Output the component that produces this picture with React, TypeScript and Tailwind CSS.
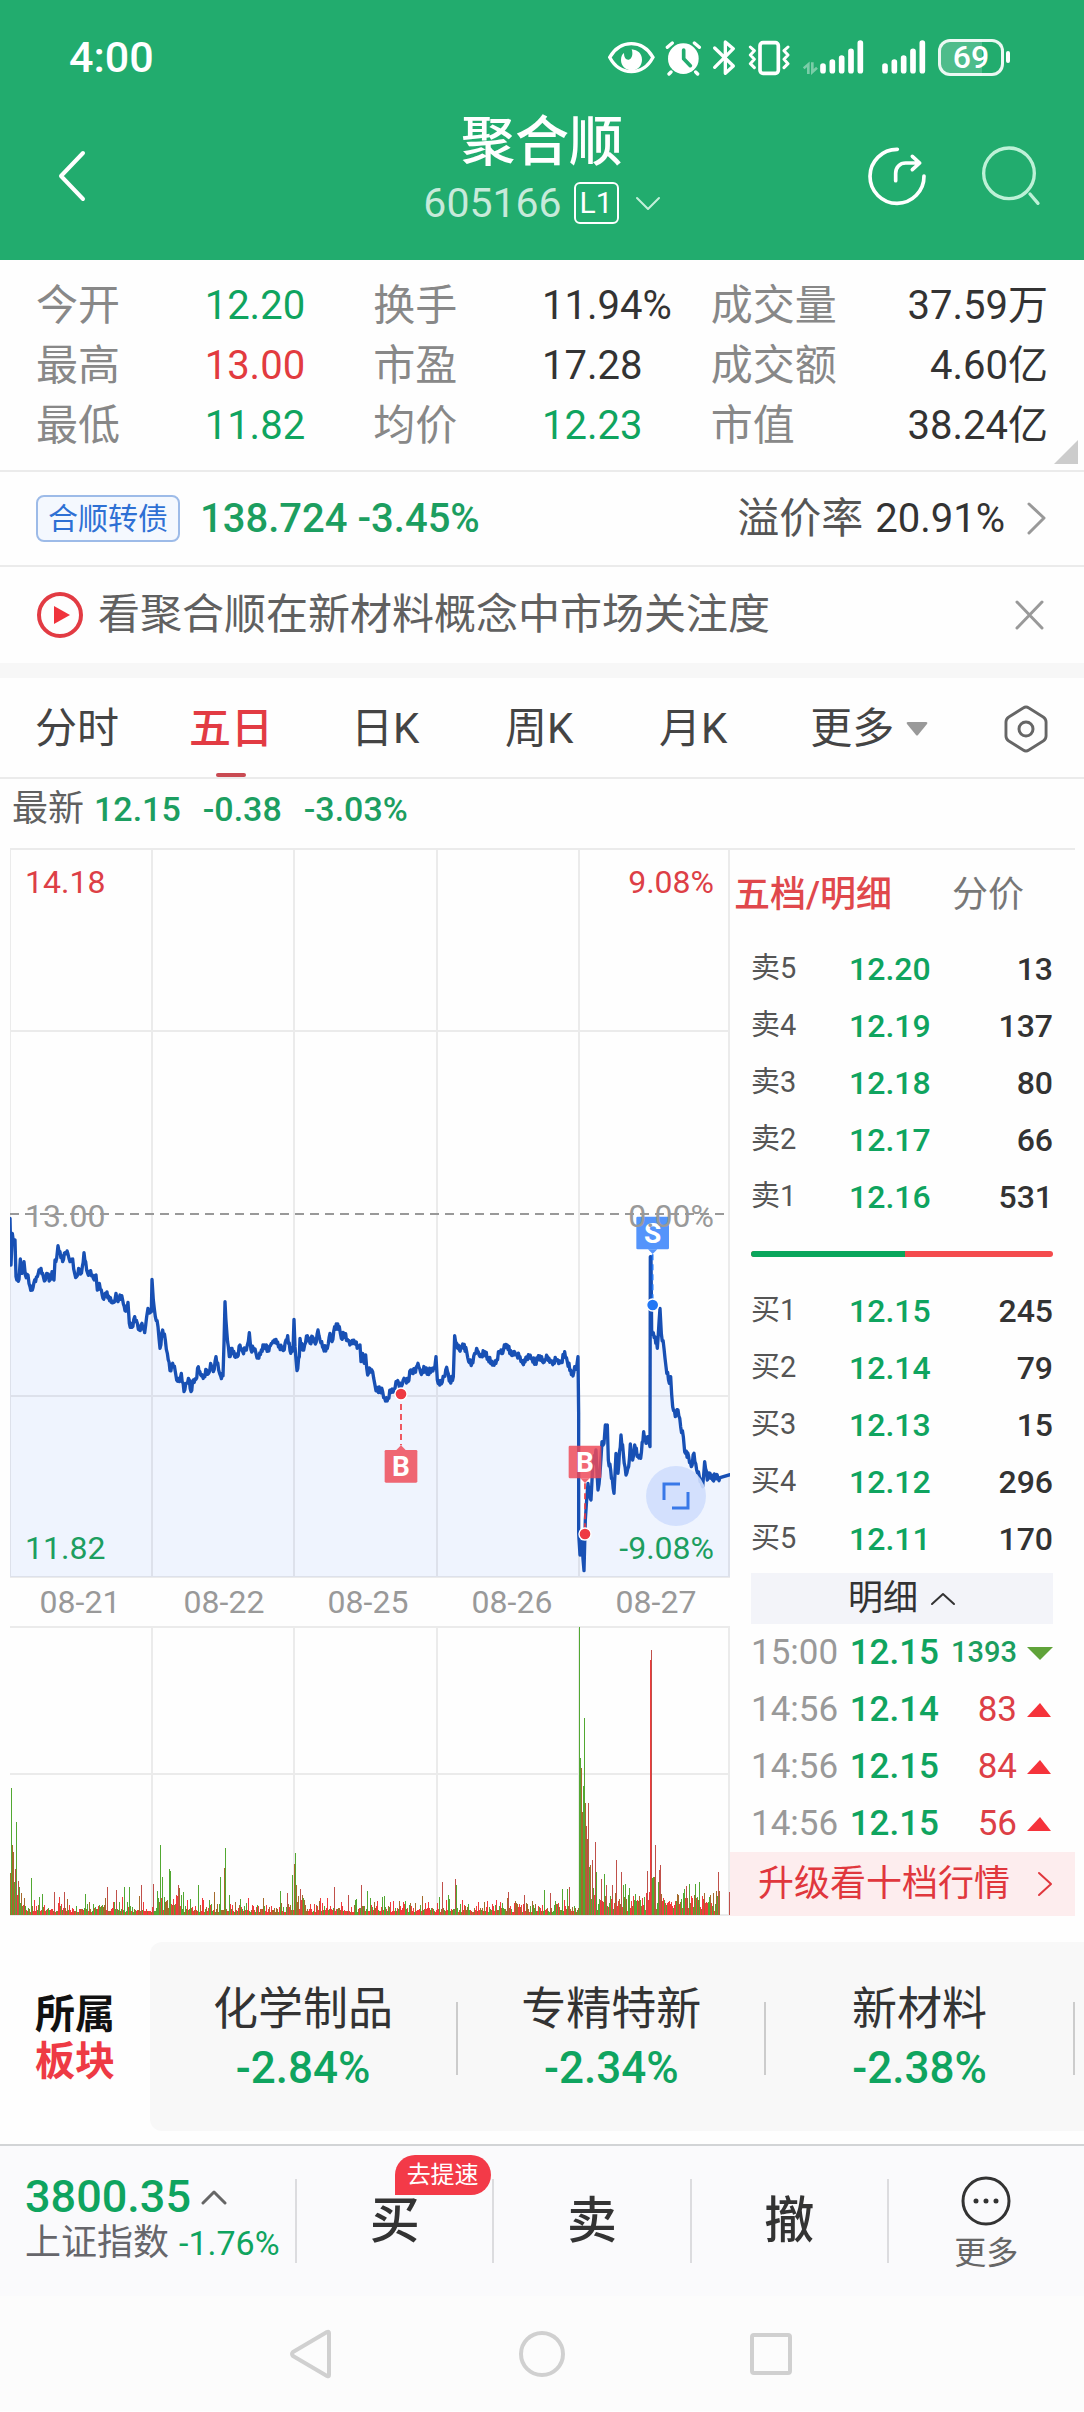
import type { ReactNode } from "react";

type Tone = "up" | "down" | "plain";
const toneClass: Record<Tone, string> = {
  up: "text-[#e23b3f]",
  down: "text-[#0fa45f]",
  plain: "text-[#333]",
};

const stats: { label: string; value: string; tone: Tone }[][] = [
  [
    { label: "今开", value: "12.20", tone: "down" },
    { label: "最高", value: "13.00", tone: "up" },
    { label: "最低", value: "11.82", tone: "down" },
  ],
  [
    { label: "换手", value: "11.94%", tone: "plain" },
    { label: "市盈", value: "17.28", tone: "plain" },
    { label: "均价", value: "12.23", tone: "down" },
  ],
  [
    { label: "成交量", value: "37.59万", tone: "plain" },
    { label: "成交额", value: "4.60亿", tone: "plain" },
    { label: "市值", value: "38.24亿", tone: "plain" },
  ],
];

const asks = [
  ["卖5", "12.20", "13"],
  ["卖4", "12.19", "137"],
  ["卖3", "12.18", "80"],
  ["卖2", "12.17", "66"],
  ["卖1", "12.16", "531"],
];
const bids = [
  ["买1", "12.15", "245"],
  ["买2", "12.14", "79"],
  ["买3", "12.13", "15"],
  ["买4", "12.12", "296"],
  ["买5", "12.11", "170"],
];
const ticks = [
  { time: "15:00", price: "12.15", lots: "1393", buy: false },
  { time: "14:56", price: "12.14", lots: "83", buy: true },
  { time: "14:56", price: "12.15", lots: "84", buy: true },
  { time: "14:56", price: "12.15", lots: "56", buy: true },
];
const sectors = [
  ["化学制品", "-2.84%"],
  ["专精特新", "-2.34%"],
  ["新材料", "-2.38%"],
];
const days = ["08-21", "08-22", "08-25", "08-26", "08-27"];

/* Turning points of the five-day price curve, in thirds of a pixel. */
const curve =
  "30,115 33,255 37,160 42,185 45,180 48,290 57,298 61,237 66,280 72,245 76,285 84,285 90,320 97,330 104,300 112,290 117,270 123,265 130,290 136,300 140,280 150,300 156,275 162,300 165,240 170,235 174,197 180,215 188,245 196,218 204,222 210,245 218,237 224,280 230,290 236,265 242,282 247,260 252,218 257,245 263,280 272,272 280,295 288,285 292,330 298,310 304,330 309,355 316,340 326,348 334,367 344,365 348,340 354,365 360,345 368,360 375,392 384,367 388,430 396,442 404,410 412,430 418,450 426,430 434,458 440,410 444,385 450,398 454,395 456,298 460,360 466,410 474,440 480,505 488,450 496,480 502,520 510,572 518,550 526,575 530,600 538,605 544,580 552,635 560,610 568,600 573,635 580,600 588,598 595,560 602,585 612,588 620,570 626,580 632,550 640,575 648,530 656,570 662,588 669,588 672,490 675,365 680,450 688,530 696,505 704,530 712,530 720,495 728,515 736,510 742,495 748,458 753,510 760,505 768,520 774,532 784,510 794,495 804,510 814,490 828,478 838,498 850,512 858,480 863,467 870,512 879,512 882,418 885,500 891,572 898,530 900,475 908,510 914,495 922,467 930,490 938,470 946,492 954,450 960,480 970,505 982,505 990,460 996,485 1004,440 1018,440 1024,475 1032,460 1042,478 1052,490 1064,488 1074,500 1080,495 1083,545 1088,520 1093,550 1097,525 1103,585 1110,565 1118,575 1124,610 1128,632 1140,628 1148,635 1154,655 1164,655 1172,630 1182,628 1188,605 1196,612 1204,620 1212,595 1224,605 1232,570 1244,575 1254,550 1262,578 1274,565 1284,578 1296,565 1304,565 1308,530 1312,600 1324,612 1332,590 1340,562 1350,605 1360,590 1364,467 1370,490 1378,510 1388,492 1400,515 1406,545 1416,550 1424,520 1430,505 1440,530 1454,515 1464,535 1480,550 1490,540 1498,515 1508,520 1513,495 1522,495 1534,525 1546,522 1560,530 1568,550 1580,530 1596,535 1606,548 1620,528 1630,548 1642,530 1656,548 1668,538 1684,548 1694,515 1702,545 1712,570 1719,588 1724,560 1730,560 1734,530 1736,700 1736,1060 1740,1125 1746,1085 1752,1172 1756,1020 1760,960 1764,910 1773,960 1778,860 1788,810 1794,930 1800,880 1806,785 1812,790 1816,735 1822,735 1825,840 1832,870 1842,940 1848,820 1854,880 1863,765 1870,820 1878,885 1886,860 1891,792 1898,840 1904,795 1914,830 1922,835 1931,755 1938,790 1944,770 1950,800 1951,230 1953,230 1955,450 1965,470 1972,505 1980,385 1984,460 1992,505 1998,560 2008,610 2012,590 2018,680 2026,710 2034,690 2042,740 2050,770 2054,815 2066,830 2074,860 2082,820 2090,870 2098,890 2108,920 2114,845 2122,900 2130,880 2138,900 2146,885 2154,895 2160,893 2190,884";

function noise(n: number) {
  const v = Math.sin(n * 127.1 + 11.7) * 43758.5453;
  return v - Math.floor(v);
}

/* Adds one-tick wobble between the turning points. */
function priceLine() {
  const pts = curve.split(" ").map((p) => p.split(",").map(Number));
  const out: string[] = [];
  pts.forEach(([x, y], i) => {
    out.push(`${x},${y}`);
    const next = pts[i + 1];
    if (!next || i > pts.length - 3) return;
    const gap = next[0] - x;
    if (gap < 5) return;
    const steps = Math.round(gap / 2.5);
    for (let s = 1; s < steps; s++) {
      const t = s / steps;
      const wob = (s % 2 ? 1 : -1) * (noise(x + s) > 0.35 ? 8 : 2);
      out.push(`${(x + gap * t).toFixed(1)},${(y + (next[1] - y) * t + wob).toFixed(1)}`);
    }
  });
  return out.join(" ");
}
const line = priceLine();

const R = "#f03a3c";
const G = "#52a832";
const M = "#a46a2c";
const D = "#c0504a";
/* Tall volume bars: x, height, colour. */
const spikes: [number, number, string][] = [
  [0, 42, M], [1, 127, G], [2, 70, M], [3, 63, M], [4, 33, G], [5, 46, D], [6, 93, G], [8, 34, D], [9, 28, G], [11, 22, M],
  [21, 37, G], [32, 21, G], [44, 23, D], [54, 23, D], [75, 21, G], [97, 28, D], [106, 25, D], [114, 28, G], [119, 28, G],
  [131, 30, D], [143, 31, D], [150, 70, G], [152, 38, G], [159, 46, G], [160, 44, G], [168, 30, D], [169, 27, M], [188, 30, G],
  [204, 23, M], [210, 38, G], [214, 47, M], [215, 67, G], [219, 20, G], [270, 24, G], [277, 22, D], [282, 40, G], [284, 51, M],
  [285, 62, G], [286, 30, M], [290, 26, D], [324, 28, D], [338, 20, D], [351, 30, D], [357, 24, G], [374, 19, G], [432, 33, D],
  [438, 20, G], [445, 36, D], [446, 30, G], [498, 23, D], [514, 20, D], [534, 25, G], [540, 22, D], [552, 26, G], [557, 26, G], [559, 28, D],
  [569, 288, G], [570, 157, G], [571, 147, M], [572, 103, M], [573, 129, G], [574, 197, G], [575, 112, M], [576, 89, D], [577, 76, M], [578, 112, D],
  [579, 48, G], [580, 50, M], [582, 55, D], [583, 27, G], [585, 73, D], [586, 43, G], [591, 36, D], [594, 41, G], [596, 30, D],
  [602, 30, D], [606, 55, D], [611, 43, D], [613, 30, G], [615, 31, G], [619, 27, G], [637, 44, D], [640, 255, R], [641, 265, D],
  [642, 37, G], [643, 38, G], [644, 38, M], [645, 70, D], [648, 33, G], [649, 45, D], [650, 50, D], [651, 21, M],
  [674, 26, G], [676, 29, D], [679, 31, G], [685, 31, G], [689, 33, G], [694, 22, M], [700, 20, M], [706, 24, M], [708, 43, D], [709, 24, M], [719, 23, D],
];
const minuteBars = Array.from({ length: 710 }, (_, x) => {
  const a = noise(x);
  const late = x > 568 ? 7 : x < 10 || Math.abs(x - 160) < 14 || (x > 284 && x < 296) ? 6 : 0;
  const h = 3 + -Math.log(1 - a * 0.96) * 5 + late * noise(x + 900) * 2;
  const c = noise(x + 400);
  return { x, h: Math.round(h), c: c < 0.48 ? R : c < 0.74 ? M : G };
});

function Chevron({ d, w, h, color, stroke = 3 }: { d: string; w: number; h: number; color: string; stroke?: number }) {
  return (
    <svg width={w} height={h} viewBox={`0 0 ${w} ${h}`} fill="none" stroke={color} strokeWidth={stroke} strokeLinecap="round" strokeLinejoin="round" aria-hidden="true">
      <path d={d} />
    </svg>
  );
}

function Signal() {
  return (
    <svg width="44" height="38" viewBox="0 0 132 114" stroke="#fff" strokeWidth="17" strokeLinecap="round" aria-hidden="true">
      <path d="M9 84v14M37 72v26M65 60v38M93 40v58M121 15v83" />
    </svg>
  );
}

function StatusBar() {
  return (
    <div className="flex h-[112px] items-center justify-between pt-0.5 pr-[74px] pl-[69px]">
      <time className="text-[43px] leading-none font-medium">4:00</time>
      <div className="flex items-center">
        <svg width="47" height="38" viewBox="50 50 141 114" fill="none" aria-hidden="true">
          <path d="M55 108C70 82 94 67 120 67s50 15 65 41c-15 28-39 43-65 43s-50-15-65-43Z" stroke="#fff" strokeWidth="10" />
          <path d="M121 84c18 2 31 12 31 31s-14 32-31 32-32-12-32-31c0-11 4-18 9-21 0 14 6 21 14 20 10-2 14-16 9-31Z" fill="#fff" />
        </svg>
        <svg className="ml-2.5" width="37" height="38" viewBox="224 50 111 114" aria-hidden="true">
          <circle cx="279" cy="112" r="46" fill="#fff" />
          <path d="M231 78l15-13M327 78l-15-13M242 152l-6 6M316 152l6 6" stroke="#fff" strokeWidth="10" strokeLinecap="round" />
          <path d="M280 86v26l20 21" fill="none" stroke="#22ac6e" strokeWidth="11" strokeLinecap="round" strokeLinejoin="round" />
        </svg>
        <svg className="ml-2.5" width="24" height="38" viewBox="365 50 72 114" fill="none" stroke="#fff" strokeWidth="10" strokeLinejoin="round" strokeLinecap="round" aria-hidden="true">
          <path d="M373 80l56 54-24 22V62l24 20-56 56" />
        </svg>
        <svg className="ml-3" width="43" height="38" viewBox="470 50 129 114" fill="none" stroke="#fff" aria-hidden="true">
          <rect x="506" y="64" width="55" height="92" rx="9" strokeWidth="11" />
          <path d="M477 77l12 11-12 13 12 13-12 13 12 12M590 77l-12 11 12 13-12 13 12 13-12 12" strokeWidth="9" strokeLinejoin="round" strokeLinecap="round" />
        </svg>
        <svg className="ml-3" width="15" height="38" viewBox="634 50 45 114" fill="none" stroke="#fff" strokeOpacity=".4" strokeWidth="8" aria-hidden="true">
          <path d="M636 141l14-12v29M662 123v29l14-13" />
        </svg>
        <div className="ml-0.5"><Signal /></div>
        <div className="ml-[18px]"><Signal /></div>
        <div className="ml-3 flex h-[37px] w-[66px] items-center justify-center rounded-[12px] border-3 border-white/90 bg-[linear-gradient(90deg,rgba(255,255,255,.2)_68%,transparent_68%)] text-[32px] leading-none font-medium">69</div>
        <div className="ml-0.5 h-3 w-1 rounded-full bg-white" />
      </div>
    </div>
  );
}

function Header() {
  return (
    <header className="bg-[#22ac6e] pb-6 text-white">
      <StatusBar />
      <div className="grid grid-cols-[1fr_auto_1fr]">
        <div className="flex items-center pt-1 pl-14">
          <button aria-label="返回"><Chevron d="M27 4L5 27l22 23" w={32} h={54} color="#fff" stroke={4} /></button>
        </div>
        <div className="flex flex-col items-center">
          <h1 className="text-[54px] leading-[62px] font-medium">聚合顺</h1>
          <button className="flex h-[62px] items-center pb-1 text-[41px] leading-none text-white/75">
            605166
            <span className="mr-4 ml-3 flex h-[42px] w-[45px] items-center justify-center rounded-md border-2 border-white text-[30px] leading-none text-white">L1</span>
            <Chevron d="M2 3l11 11L24 3" w={26} h={17} color="#c4f0da" stroke={2} />
          </button>
        </div>
        <div className="flex items-center justify-end gap-[54px] pt-1 pr-[43px]">
          <button aria-label="分享">
            <svg width="60" height="60" viewBox="84 107 180 180" fill="none" stroke="#fff" strokeWidth="11" strokeLinecap="round" strokeLinejoin="round">
              <path d="M175 117A81 81 0 1 0 255 197" />
              <path d="M170 211v-22c0-18 12-31 30-31h42M220 138l22 20-22 20" />
            </svg>
          </button>
          <button aria-label="搜索">
            <svg width="60" height="60" viewBox="423 107 180 180" fill="none" stroke="#bdf1d7" strokeWidth="10" strokeLinecap="round">
              <circle cx="507" cy="189" r="76" />
              <path d="M570 251l24 28" />
            </svg>
          </button>
        </div>
      </div>
    </header>
  );
}

function Marker({ x, y, dotY, up, letter, fill, dot }: { x: number; y: number; dotY: number; up: boolean; letter: string; fill: string; dot: string }) {
  const tip = up ? `M${x - 14} ${y}l14-14 14 14Z` : `M${x - 14} ${y + 98}l14 14 14-14Z`;
  return (
    <g>
      <path d={up ? `M${x} ${dotY}V${y - 14}` : `M${x} ${y + 113}V${dotY}`} stroke={dot} strokeWidth="5" strokeDasharray="18 12" />
      <rect x={x - 49} y={y} width="98" height="98" rx="4" fill={fill} fillOpacity=".84" />
      <path d={tip} fill={fill} fillOpacity=".84" />
      <text x={x} y={y + 78} textAnchor="middle" fontSize="84" fontWeight="700" fill="#fff">{letter}</text>
      <circle cx={x} cy={dotY} r="18" fill={dot} stroke="#fff" strokeWidth="4" />
    </g>
  );
}

function PriceChart() {
  return (
    <div className="relative text-[32px] leading-none">
      <svg className="block h-auto w-full" viewBox="0 0 720 728" aria-label="五日走势">
        <g transform="translate(-10 330) scale(.33333)">
          <polygon points={`${line} 2190,1191 30,1191`} fill="#eff4fe" />
        </g>
        <g stroke="#000" strokeOpacity=".075" strokeWidth="2" fill="none">
          <path d="M0 0v727M142 0v727M284 0v727M427 0v727M569 0v727M719 0v727M0 181h720M0 546h720M0 727h720" />
        </g>
        <path d="M0 364h720" stroke="#999" strokeWidth="2" strokeDasharray="9 6" />
        <g transform="translate(-10 330) scale(.33333)">
          <polyline points={line} fill="none" stroke="#1850b4" strokeWidth="10" strokeLinejoin="round" strokeLinecap="round" />
          <Marker x={1203} y={810} dotY={642} up letter="B" fill="#ee4a58" dot="#ee3a42" />
          <Marker x={1755} y={797} dotY={1062} up={false} letter="B" fill="#ee4a58" dot="#ee3a42" />
          <Marker x={1958} y={110} dotY={375} up={false} letter="S" fill="#3380fa" dot="#2277f5" />
        </g>
      </svg>
      <span className="absolute top-4 left-[15px] text-[#dd3f46]">14.18</span>
      <span className="absolute top-4 right-4 text-[#dd3f46]">9.08%</span>
      <span className="absolute top-[350px] left-[15px] text-[#999]">13.00</span>
      <span className="absolute top-[350px] right-4 text-[#999]">0.00%</span>
      <span className="absolute bottom-3.5 left-[15px] text-[#1c9e60]">11.82</span>
      <span className="absolute right-4 bottom-3.5 text-[#1c9e60]">-9.08%</span>
      <button aria-label="全屏" className="absolute right-6 bottom-[52px] flex h-[60px] w-[60px] items-center justify-center rounded-full bg-[#cfdefd]/90">
        <svg width="28" height="28" viewBox="0 0 28 28" fill="none" stroke="#3878e8" strokeWidth="3">
          <path d="M2 18V2h16M26 10v16H10" />
        </svg>
      </button>
    </div>
  );
}

function VolumeChart() {
  return (
    <svg className="block h-auto w-full" viewBox="0 0 720 290" aria-label="成交量" shapeRendering="crispEdges">
      <path d="M0 1h720M0 148h720M0 289h720M142 0v290M284 0v290M427 0v290M569 0v290M719 0v290" stroke="#ebebeb" strokeWidth="2" />
      {minuteBars.map((b) => (
        <rect key={b.x} x={b.x} y={289 - b.h} width="1" height={b.h} fill={b.c} />
      ))}
      {spikes.map(([x, h, c]) => (
        <rect key={x} x={x} y={289 - h} width="1" height={h} fill={c} />
      ))}
    </svg>
  );
}

function Book({ rows, label }: { rows: string[][]; label: string }) {
  return (
    <table aria-label={label} className="w-full table-fixed leading-none">
      <tbody>
        {rows.map(([name, price, lots]) => (
          <tr key={name} className="h-[57px]">
            <th scope="row" className="w-[98px] text-left text-[29px] font-normal text-[#555]">{name}</th>
            <td className="text-[32px] font-medium text-[#0fa45f]">{price}</td>
            <td className="w-[90px] text-right text-[32px] font-medium text-[#333]">{lots}</td>
          </tr>
        ))}
      </tbody>
    </table>
  );
}

function SidePanel() {
  return (
    <aside className="flex w-[345px] shrink-0 flex-col">
      <div className="flex h-[90px] items-center pl-1 text-[36px] leading-none">
        <button className="font-medium text-[#e0484c]">五档/明细</button>
        <button className="ml-[60px] text-[#777]">分价</button>
      </div>
      <div className="pr-[22px] pl-[21px]">
        <Book rows={asks} label="卖盘" />
        <div className="flex h-[57px] items-center">
          <div className="flex h-1.5 w-full overflow-hidden rounded-full bg-[#f44b4d]">
            <div className="w-[51%] bg-[#0aa65c]" />
          </div>
        </div>
        <Book rows={bids} label="买盘" />
        <button className="mt-1.5 flex h-[51px] w-full items-center justify-center gap-3 bg-[#f3f4f9] text-[35px] leading-none text-[#333]">
          明细
          <Chevron d="M2 13L13 3l11 10" w={26} h={16} color="#333" stroke={2} />
        </button>
        <table aria-label="成交明细" className="w-full leading-none">
          <tbody>
            {ticks.map((t, i) => (
              <tr key={i} className="h-[57px]">
                <td className="text-[35px] text-[#999]">{t.time}</td>
                <td className="text-right text-[35px] font-medium text-[#0fa45f]">{t.price}</td>
                <td className={t.buy ? "w-[78px] text-right text-[35px] text-[#dd3f46]" : "w-[78px] text-right text-[29px] font-medium text-[#1c9e60]"}>{t.lots}</td>
                <td className="w-[36px]">
                  <svg className="ml-auto" width="26" height="14" viewBox="0 0 26 14" aria-label={t.buy ? "买入" : "卖出"}>
                    <path d={t.buy ? "M0 14L13 0l11 14Z" : "M0 1h26L13 14Z"} fill={t.buy ? "#f5333b" : "#60a33a"} />
                  </svg>
                </td>
              </tr>
            ))}
          </tbody>
        </table>
      </div>
      <button className="flex flex-1 items-center justify-between bg-[#fdedee] pr-[22px] pl-7 text-[36px] leading-none text-[#e0373d]">
        升级看十档行情
        <Chevron d="M2 2l12 11L2 24" w={16} h={26} color="#e0373d" stroke={2} />
      </button>
    </aside>
  );
}

function Divider({ children }: { children?: ReactNode }) {
  return <div className="flex-1 border-l-2 border-[#dcdcdf]">{children}</div>;
}

export default function App() {
  return (
    <div className="min-h-screen bg-[#fefefe] font-['Roboto','Noto_Sans_CJK_SC',sans-serif] text-[#333]">
      <Header />

      <section className="relative grid h-[212px] grid-cols-3 border-b-2 border-[#ebebeb] px-9 pt-4 leading-[60px]">
        {stats.map((col, i) => (
          <dl key={i}>
            {col.map((s) => (
              <div key={s.label} className={i === 2 ? "flex justify-between" : "flex"}>
                <dt className={i === 2 ? "text-[42px] text-[#888]" : "w-1/2 text-[42px] text-[#888]"}>{s.label}</dt>
                <dd className={`text-[40px] whitespace-nowrap ${toneClass[s.tone]}`}>{s.value}</dd>
              </div>
            ))}
          </dl>
        ))}
        <svg className="absolute right-1.5 bottom-1.5" width="24" height="24" viewBox="0 0 24 24" aria-hidden="true">
          <path d="M24 0v24H0Z" fill="#ccc" />
        </svg>
      </section>

      <a href="#bond" className="flex h-[95px] items-center border-b-2 border-[#ebebeb] pr-[38px] pl-9 text-[40px] leading-none">
        <span className="flex h-[47px] items-center rounded-lg border-2 border-[#9dbbe8] bg-[#f4f8fe] px-[10px] text-[30px] text-[#2e70d4]">合顺转债</span>
        <span className="ml-5 font-medium text-[#1c9e60]">138.724 -3.45%</span>
        <span className="mr-3 ml-auto text-[42px] text-[#555]">溢价率</span>
        <span>20.91%</span>
        <span className="ml-[22px]"><Chevron d="M2 2l15 14L2 31" w={19} h={33} color="#999" /></span>
      </a>

      <div className="flex h-24 items-center pr-10 pl-9">
        <svg width="48" height="48" viewBox="0 0 48 48" aria-hidden="true">
          <circle cx="24" cy="24" r="21" fill="none" stroke="#e23b43" strokeWidth="4" />
          <path d="M18 15l16 9-16 9Z" fill="#f0333c" />
        </svg>
        <a href="#topic" className="ml-3.5 text-[42px] leading-none text-[#606060]">看聚合顺在新材料概念中市场关注度</a>
        <button aria-label="关闭" className="ml-auto"><Chevron d="M2 2l25 26M27 2L2 28" w={29} h={30} color="#999" /></button>
      </div>
      <div className="h-[15px] bg-[#f7f7f7]" />

      <nav className="flex h-[101px] items-center border-b-2 border-[#ebebeb] pt-0.5 pr-9 text-[42px] leading-none text-[#444]">
        <button className="w-[14.7%]">分时</button>
        <button className="relative flex h-full w-[14.7%] items-center justify-center font-medium text-[#e23b43]">
          五日
          <span className="absolute bottom-0 left-1/2 h-1 w-[30px] -translate-x-1/2 rounded-sm bg-[#c94a52]" />
        </button>
        <button className="w-[14.7%]">日K</button>
        <button className="w-[14.7%]">周K</button>
        <button className="w-[14.7%]">月K</button>
        <button className="ml-10 flex items-center gap-3">
          更多
          <svg width="22" height="14" viewBox="0 0 22 14" aria-hidden="true"><path d="M2 0h18q2 0 1 2L12 13q-1 1-2 0L1 2Q0 0 2 0Z" fill="#999" /></svg>
        </button>
        <button aria-label="设置" className="ml-auto">
          <svg width="44" height="48" viewBox="0 0 44 48" fill="none" stroke="#666" strokeWidth="3" strokeLinejoin="round">
            <path d="M19 3q3-2 6 0l15 9q3 2 3 5v14q0 3-3 5l-15 9q-3 2-6 0L4 36q-3-2-3-5V17q0-3 3-5Z" transform="translate(1 0) scale(.955 1)" />
            <circle cx="22" cy="24" r="7" />
          </svg>
        </button>
      </nav>

      <div className="flex h-[69px] items-center gap-[22px] pb-2.5 pl-3 text-[34px] leading-none font-medium text-[#1c9e60]">
        <span><span className="mr-2.5 text-[36px] font-normal text-[#606060]">最新</span>12.15</span>
        <span>-0.38</span>
        <span>-3.03%</span>
      </div>

      <main className="mr-[9px] ml-2.5 flex border-t-2 border-[#ebebeb]">
        <div className="min-w-0 flex-1">
          <PriceChart />
          <div className="grid h-12 grid-cols-5 items-center text-center text-[32px] leading-none text-[#999]">
            {days.map((d) => <span key={d} className="pr-1">{d}</span>)}
          </div>
          <VolumeChart />
        </div>
        <SidePanel />
      </main>

      <section className="mt-[26px] flex h-[189px] overflow-hidden">
        <h2 className="flex w-[150px] shrink-0 flex-col justify-center pt-0.5 pl-[35px] text-[40px] leading-[47px] font-bold text-[#111]">
          所属<span className="text-[#ee3a44]">板块</span>
        </h2>
        <div className="flex flex-1 rounded-l-xl bg-[#f8f8f8]">
          {sectors.map(([name, pct]) => (
            <a key={name} href="#sector" className="flex w-[33%] shrink-0 items-center pt-1 text-center">
              <span className="flex-1">
                <span className="block text-[45px] leading-[58px]">{name}</span>
                <span className="block text-[44px] leading-[58px] font-medium text-[#0fa45f]">{pct}</span>
              </span>
              <span className="h-[73px] w-0.5 bg-[#ccc]" />
            </a>
          ))}
        </div>
      </section>

      <footer className="mt-[13px] flex h-[152px] border-t-2 border-[#d2d4d6] bg-[#fafafc] py-[33px]">
        <button className="-mt-0.5 flex w-[295px] shrink-0 flex-col justify-center pl-[25px] text-left">
          <span className="flex items-center gap-2.5 text-[45px] leading-[46px] font-medium text-[#0fa45f]">
            3800.35 <Chevron d="M2 14L13 3l11 11" w={26} h={17} color="#666" />
          </span>
          <span className="text-[36px] leading-[46px] whitespace-nowrap text-[#66666b]">
            上证指数<span className="ml-2.5 text-[34px] text-[#0fa45f]">-1.76%</span>
          </span>
        </button>
        <Divider>
          <button className="relative flex h-full w-full items-center justify-center text-[50px] leading-none font-medium">
            买
            <span className="absolute -top-6 left-1/2 flex h-10 w-24 items-center justify-center rounded-full rounded-bl-sm bg-[#f33a48] text-[24px] font-normal text-white">去提速</span>
          </button>
        </Divider>
        <Divider><button className="flex h-full w-full items-center justify-center text-[50px] leading-none font-medium">卖</button></Divider>
        <Divider><button className="flex h-full w-full items-center justify-center text-[50px] leading-none font-medium">撤</button></Divider>
        <Divider>
          <button className="-mt-1 flex w-full flex-col items-center gap-2.5 text-[32px] leading-[32px] text-[#666]">
            <svg width="52" height="52" viewBox="0 0 52 52" aria-hidden="true">
              <circle cx="26" cy="26" r="23" fill="none" stroke="#333" strokeWidth="3" />
              <path d="M16 26h0M26 26h0M36 26h0" stroke="#333" strokeWidth="5" strokeLinecap="round" />
            </svg>
            更多
          </button>
        </Divider>
      </footer>

      <nav aria-label="系统导航" className="flex h-[115px] items-center justify-center gap-[184px] bg-[#fcfcfc]">
        <button aria-label="后退">
          <svg width="46" height="50" viewBox="0 0 46 50" fill="none" stroke="#d0d0d0" strokeWidth="4" strokeLinejoin="round"><path d="M41 4v42q0 2-2 1L5 27q-2-2 0-4L39 3q2-1 2 1Z" /></svg>
        </button>
        <button aria-label="主页">
          <svg width="48" height="48" viewBox="0 0 48 48" fill="none" stroke="#d0d0d0" strokeWidth="4"><circle cx="24" cy="24" r="21" /></svg>
        </button>
        <button aria-label="最近任务">
          <svg width="46" height="46" viewBox="0 0 46 46" fill="none" stroke="#d0d0d0" strokeWidth="4"><rect x="2" y="4" width="38" height="38" rx="2" /></svg>
        </button>
      </nav>
    </div>
  );
}
